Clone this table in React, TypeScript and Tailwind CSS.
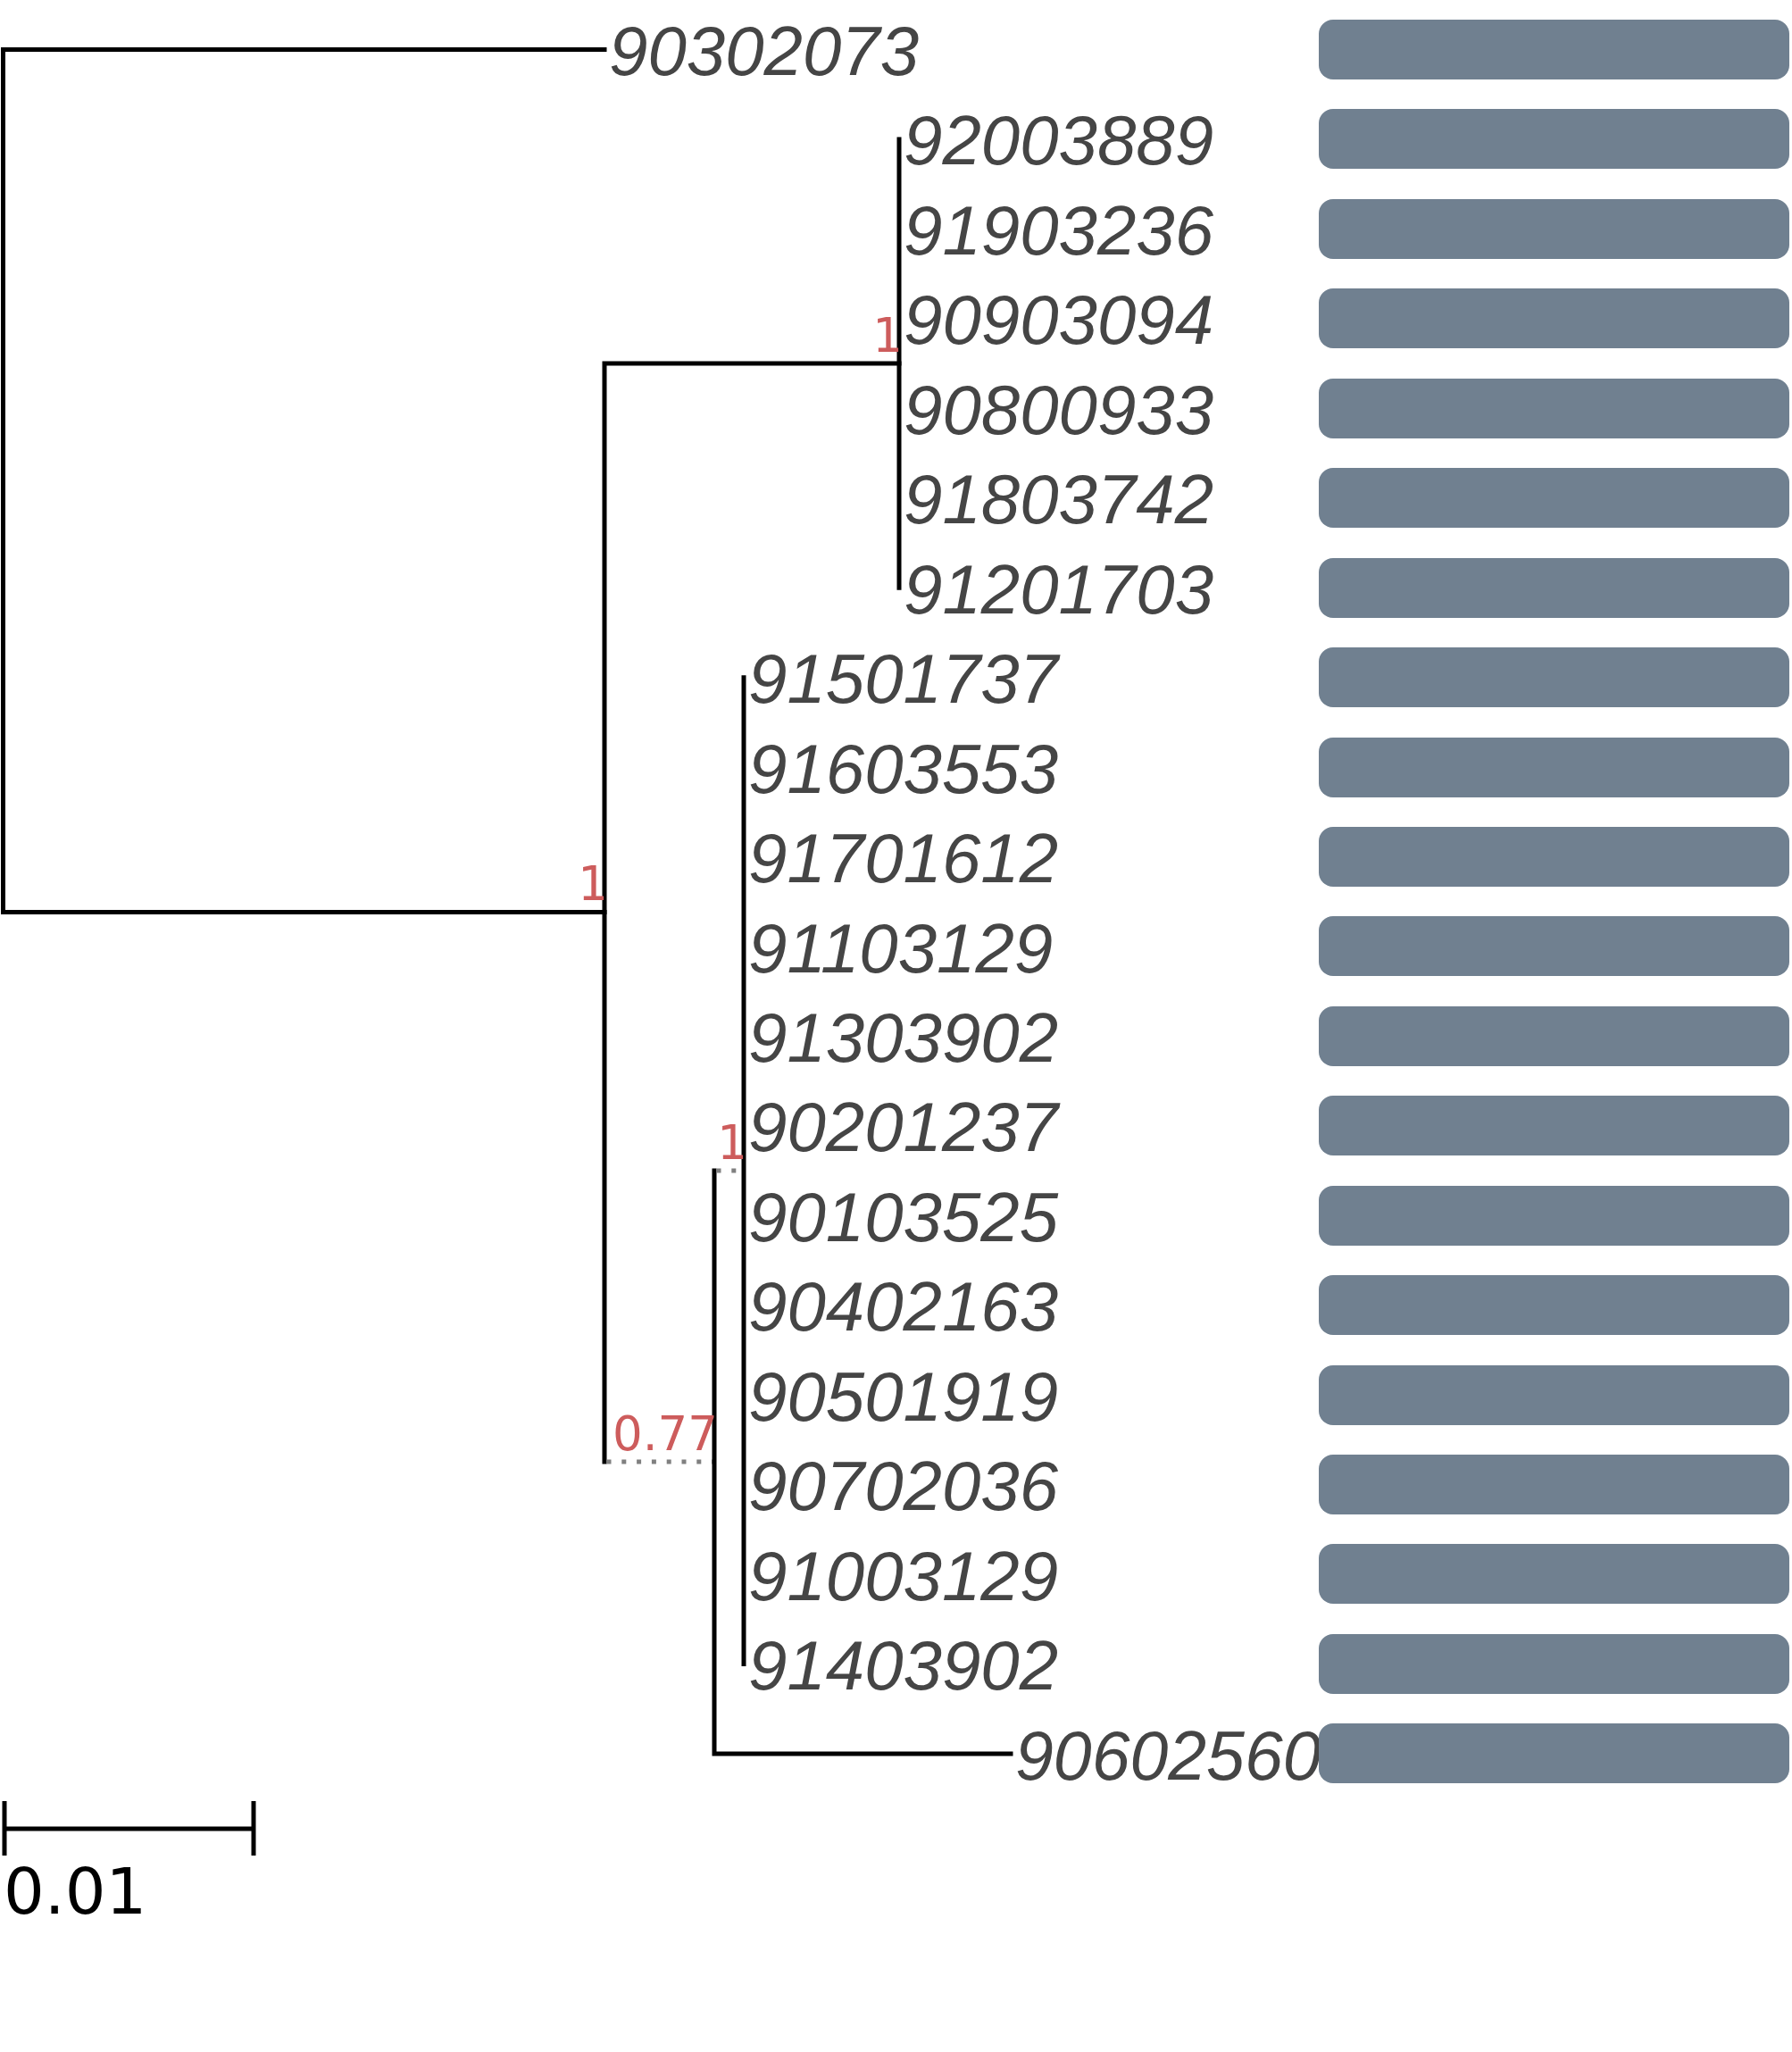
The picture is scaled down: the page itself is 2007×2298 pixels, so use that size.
import React from "react";

const PITCH = 100.45;
const cy = (i: number) => 55.5 + PITCH * i;

const leaves: { name: string; tip: number }[] = [
  { name: "90302073", tip: 677 },
  { name: "92003889", tip: 1007 },
  { name: "91903236", tip: 1007 },
  { name: "90903094", tip: 1007 },
  { name: "90800933", tip: 1007 },
  { name: "91803742", tip: 1007 },
  { name: "91201703", tip: 1007 },
  { name: "91501737", tip: 833 },
  { name: "91603553", tip: 833 },
  { name: "91701612", tip: 833 },
  { name: "91103129", tip: 833 },
  { name: "91303902", tip: 833 },
  { name: "90201237", tip: 833 },
  { name: "90103525", tip: 833 },
  { name: "90402163", tip: 833 },
  { name: "90501919", tip: 833 },
  { name: "90702036", tip: 833 },
  { name: "91003129", tip: 833 },
  { name: "91403902", tip: 833 },
  { name: "90602560", tip: 1132 },
];

const supports: { label: string; x: number; y: number }[] = [
  { label: "1", x: 1007, y: 407 },
  { label: "1", x: 677, y: 1021.5 },
  { label: "1", x: 833, y: 1311 },
  { label: "0.77", x: 800, y: 1637 },
];

function Tree() {
  const line = {
    stroke: "#000",
    strokeWidth: 5,
    fill: "none",
    strokeLinecap: "square" as const,
    strokeLinejoin: "miter" as const,
  };
  const dotted = {
    stroke: "#808080",
    strokeWidth: 5,
    fill: "none",
    strokeDasharray: "5 11.8",
  };
  return (
    <svg
      width={1477}
      height={2298}
      viewBox="0 0 1477 2298"
      className="block shrink-0 overflow-visible"
    >
      {/* root */}
      <path d={`M 677 ${cy(0)} H 3.5 V 1021.5 H 677`} {...line} />
      {/* node A */}
      <path d={`M 1007 407 H 677 V 1637`} {...line} />
      <path d={`M 679.5 1637 H 800`} {...dotted} />
      {/* clade 1 */}
      <path d={`M 1007 ${cy(1)} V ${cy(6)}`} {...line} />
      {/* node B */}
      <path d={`M 800 1311 V ${cy(19)} H 1132`} {...line} />
      <path d={`M 802.5 1311 H 833`} {...dotted} />
      {/* clade 2 */}
      <path d={`M 833 ${cy(7)} V ${cy(18)}`} {...line} />

      {leaves.map((l, i) => (
        <text
          key={l.name + i}
          x={l.tip + 5}
          y={cy(i) + 28.5}
          fill="#454545"
          fontSize={i === 19 ? 77 : 78}
          fontStyle="italic"
          fontFamily='"Liberation Sans", Arial, sans-serif'
        >
          {l.name}
        </text>
      ))}

      {supports.map((s, i) => (
        <text
          key={i}
          x={s.x + 4}
          y={s.y - 13.5}
          fill="#cd5c5c"
          fontSize={53}
          textAnchor="end"
          fontFamily='"DejaVu Sans", sans-serif'
        >
          {s.label}
        </text>
      ))}

      {/* scale bar */}
      <path d="M 5 2048 H 284" {...line} strokeLinecap="butt" />
      <path d="M 5 2017 V 2078" {...line} strokeLinecap="butt" />
      <path d="M 284 2017 V 2078" {...line} strokeLinecap="butt" />
      <text x={4} y={2143} fill="#000" fontSize={72} fontFamily='"DejaVu Sans", sans-serif'>
        0.01
      </text>
    </svg>
  );
}

export default function App() {
  return (
    <div className="flex w-[2007px] h-[2298px] bg-white overflow-hidden">
      <Tree />
      <div className="relative flex flex-col gap-[33.45px] pt-[22px]">
        {leaves.map((l, i) => (
          <div key={l.name + i} className="w-[527px] h-[67px] rounded-[16px] bg-[#708090]" />
        ))}
      </div>
    </div>
  );
}
